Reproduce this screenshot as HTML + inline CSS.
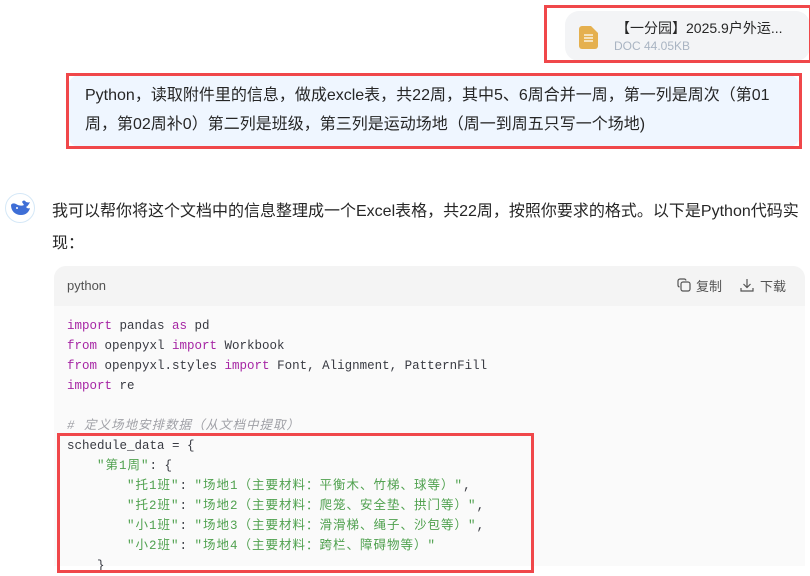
<!DOCTYPE html>
<html><head><meta charset="utf-8"><style>
body{margin:0;width:810px;height:566px;background:#fff;position:relative;overflow:hidden;font-family:"Liberation Sans","Noto Sans CJK SC",sans-serif;color:#262626}
.abs{position:absolute}
.red{position:absolute;border:3px solid #f0474a;box-sizing:border-box}
.code{font-family:"Liberation Mono","Noto Sans CJK SC",monospace;font-size:12.5px;color:#383a42;white-space:pre;line-height:20px}
.k{color:#a626a4}.s{color:#50a14f}.c{color:#a0a1a7;font-style:italic}
.w{letter-spacing:1px}
</style></head><body>
<div class="abs" style="left:565px;top:11px;width:245px;height:50px;background:#f3f4f6;border-radius:14px"></div>
<svg class="abs" style="left:579px;top:26px" width="19" height="23" viewBox="0 0 19 23"><path d="M3 0h9l7 7v13a3 3 0 0 1-3 3H3a3 3 0 0 1-3-3V3a3 3 0 0 1 3-3z" fill="#e5b04f"/><path d="M5 9h9M5 12h9M5 15h9" stroke="#fff" stroke-width="1.2"/></svg>
<div class="abs" style="left:616px;top:18px;font-size:14px;color:#262626">【一分园】2025.9户外运...</div>
<div class="abs" style="left:614px;top:39px;font-size:12px;color:#a9b4c2">DOC 44.05KB</div>
<div class="red" style="left:544px;top:5px;width:268px;height:58px"></div>

<div class="abs" style="left:68px;top:75px;width:732px;height:72px;background:#eff6ff;border-radius:12px"></div>
<div class="abs" style="left:85px;top:81px;width:706px;font-size:16px;line-height:29px;color:#262626">Python，读取附件里的信息，做成excle表，共22周，其中5、6周合并一周，第一列是周次（第01周，第02周补0）第二列是班级，第三列是运动场地（周一到周五只写一个场地)</div>
<div class="red" style="left:66px;top:73px;width:736px;height:76px"></div>

<div class="abs" style="left:5px;top:193px;width:30px;height:30px;border-radius:50%;border:1px solid #d5e8f7;box-sizing:border-box"></div>
<svg class="abs" style="left:10px;top:199px" width="22" height="18" viewBox="0 0 22 18"><path d="M1 6c0 6 4 10 10 10 5 0 8-3 9-7-2 1-3 0-4-1 2-1 3-3 4-5-2 1-3 0-4 0-1-2-3-2-4 0l2 3c-2 1-5 1-8-1-2-1-4-1-5 1z" fill="#3e6ed6"/><circle cx="7" cy="9" r="1" fill="#fff"/></svg>
<div class="abs" style="left:52px;top:196px;width:752px;font-size:16px;line-height:32px;color:#262626">我可以帮你将这个文档中的信息整理成一个Excel表格，共22周，按照你要求的格式。以下是Python代码实现：</div>

<div class="abs" style="left:54px;top:266px;width:751px;height:300px;background:#fafafa;border-radius:12px 12px 0 0"></div>
<div class="abs" style="left:54px;top:266px;width:751px;height:40px;background:#f4f4f4;border-radius:12px 12px 0 0"></div>
<div class="abs" style="left:67px;top:278px;font-size:13px;color:#525252">python</div>
<svg class="abs" style="left:677px;top:278px" width="14" height="14" viewBox="0 0 14 14" fill="none" stroke="#555" stroke-width="1.2"><rect x="4" y="4" width="9" height="9" rx="2"/><path d="M9 2.5A2 2 0 0 0 7 1H3a2 2 0 0 0-2 2v4a2 2 0 0 0 1.5 2"/></svg>
<div class="abs" style="left:696px;top:276px;font-size:13px;color:#525252">复制</div>
<svg class="abs" style="left:740px;top:278px" width="14" height="14" viewBox="0 0 14 14" fill="none" stroke="#555" stroke-width="1.2"><path d="M7 1v8M3.5 6L7 9.5 10.5 6M1 10v3h12v-3"/></svg>
<div class="abs" style="left:760px;top:276px;font-size:13px;color:#525252">下载</div>

<div class="abs code" style="left:67px;top:316px"><span class="k">import</span> pandas <span class="k">as</span> pd
<span class="k">from</span> openpyxl <span class="k">import</span> Workbook
<span class="k">from</span> openpyxl.styles <span class="k">import</span> Font, Alignment, PatternFill
<span class="k">import</span> re

<span class="c w"># 定义场地安排数据（从文档中提取）</span>
schedule_data = {
    <span class="s w">"第1周"</span>: {
        <span class="s w">"托1班"</span>: <span class="s w">"场地1（主要材料：平衡木、竹梯、球等）"</span>,
        <span class="s w">"托2班"</span>: <span class="s w">"场地2（主要材料：爬笼、安全垫、拱门等）"</span>,
        <span class="s w">"小1班"</span>: <span class="s w">"场地3（主要材料：滑滑梯、绳子、沙包等）"</span>,
        <span class="s w">"小2班"</span>: <span class="s w">"场地4（主要材料：跨栏、障碍物等）"</span>
    }</div>
<div class="red" style="left:57px;top:433px;width:477px;height:140px"></div>
</body></html>
